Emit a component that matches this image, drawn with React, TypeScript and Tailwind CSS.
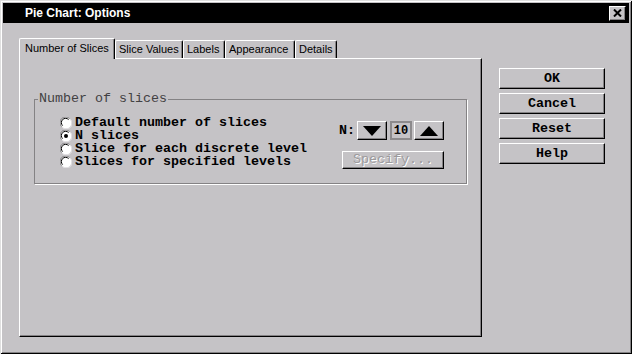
import React from "react";

const mono = "font-['Liberation_Mono','DejaVu_Sans_Mono',monospace]";
const sans = "font-['Liberation_Sans',Arial,sans-serif]";

function Radio({ checked }: { checked?: boolean }) {
  return (
    <svg width="12" height="12" viewBox="0 0 12 12" className="shrink-0">
      <circle cx="6" cy="6" r="5.5" fill="#ffffff" />
      <path d="M1.6 9.6 A5.2 5.2 0 0 1 9.6 1.6" stroke="#848284" strokeWidth="1" fill="none" />
      <path d="M2.6 8.6 A4 4 0 0 1 8.6 2.6" stroke="#000000" strokeWidth="1" fill="none" />
      <path d="M10.4 2.4 A5.2 5.2 0 0 1 2.4 10.4" stroke="#e6e4e6" strokeWidth="1" fill="none" />
      {checked && <circle cx="6" cy="6" r="2" fill="#000000" />}
    </svg>
  );
}

function Btn({ children, className = "" }: { children: React.ReactNode; className?: string }) {
  return (
    <div
      className={`flex items-center justify-center bg-[#c5c3c6] border-t border-l border-white border-r border-b border-r-[#000] border-b-[#000] shadow-[inset_-1px_-1px_0_#848284] ${className}`}
    >
      {children}
    </div>
  );
}

function Tab({ label, active, w }: { label: string; active?: boolean; w: string }) {
  return (
    <div
      className={`${w} ${
        active ? "h-[21px] -mb-px relative z-10 pl-[5px]" : "h-[18px] pl-[3px]"
      } flex items-center bg-[#c5c3c6] border-t border-l border-white border-r border-r-black rounded-tl-[2px] rounded-tr-[2px] shadow-[inset_-1px_0_0_#848284] text-[11px] text-black ${sans} whitespace-nowrap`}
    >
      <span className={active ? "-mt-[1px]" : ""}>{label}</span>
    </div>
  );
}

export default function App() {
  return (
    <div className="w-[632px] h-[354px] bg-[#c5c3c6] p-[3px] shadow-[inset_1px_1px_0_#dfdfdf,inset_-1px_-1px_0_#000,inset_2px_2px_0_#fff,inset_-2px_-2px_0_#848284] overflow-hidden">
      {/* Title bar */}
      <div className="h-[20px] bg-black flex items-center justify-between pl-[22px] pr-[3px]">
        <span className={`text-white font-bold text-[12px] leading-none ${sans}`}>Pie Chart: Options</span>
        <div className="w-[17px] h-[15px] bg-[#c5c3c6] border-t border-l border-white border-r border-b border-r-black border-b-black shadow-[inset_-1px_-1px_0_#848284] flex items-center justify-center">
          <svg width="9" height="8" viewBox="0 0 9 8">
            <path d="M1 0.5 L8 7.5 M8 0.5 L1 7.5" stroke="#000" strokeWidth="2" />
          </svg>
        </div>
      </div>

      {/* Body */}
      <div className="flex pt-[15px] pl-[16px]">
        {/* Left: tabs + panel */}
        <div className="w-[463px] flex flex-col">
          <div className="flex items-end h-[20px]">
            <Tab label="Number of Slices" active w="w-[96px]" />
            <Tab label="Slice Values" w="w-[68px]" />
            <Tab label="Labels" w="w-[42px]" />
            <Tab label="Appearance" w="w-[70px]" />
            <Tab label="Details" w="w-[42px]" />
          </div>
          <div className="h-[279px] border-t border-l border-white border-r border-b border-r-black border-b-black shadow-[inset_-1px_-1px_0_#848284] pl-[14px] pt-[34px]">
            <fieldset className={`w-[433px] h-[91px] border border-[#848284] shadow-[1px_1px_0_#fff] ${mono} text-[13.34px]`}>
              <legend className="ml-[3px] px-[1px] leading-[13px] text-[#424142] -translate-y-[1px]">Number of slices</legend>
              <div className="flex w-full pl-[25px] pr-[22px] pt-[10px]">
                <div className="flex flex-col font-bold text-black">
                  {[
                    ["Default number of slices", false],
                    ["N slices", true],
                    ["Slice for each discrete level", false],
                    ["Slices for specified levels", false],
                  ].map(([t, c]) => (
                    <div key={t as string} className="flex items-center h-[13px] gap-[3px] leading-[13px]">
                      <Radio checked={c as boolean} />
                      <span className="whitespace-pre">{t as string}</span>
                    </div>
                  ))}
                </div>
                <div className="ml-auto mt-[5px] flex flex-col items-end">
                  <div className="flex items-center h-[19px]">
                    <span className="font-bold mr-[2px] leading-[13px]">N:</span>
                    <Btn className="w-[30px] h-[19px]">
                      <svg width="18" height="10" viewBox="0 0 18 10">
                        <path d="M0 0 H18 L9 10 Z" fill="#000" />
                      </svg>
                    </Btn>
                    <div className="w-[22px] h-[19px] ml-[3px] mr-[2px] border-2 border-[#8c8a8c] flex items-center justify-center font-bold text-[12px] leading-none">
                      10
                    </div>
                    <Btn className="w-[30px] h-[19px]">
                      <svg width="18" height="10" viewBox="0 0 18 10">
                        <path d="M0 10 H18 L9 0 Z" fill="#000" />
                      </svg>
                    </Btn>
                  </div>
                  <Btn className="w-[102px] h-[18px] mt-[11px]">
                    <span className="text-[#9c9a9c] [text-shadow:1px_1px_0_#fff] leading-none">Specify...</span>
                  </Btn>
                </div>
              </div>
            </fieldset>
          </div>
        </div>

        {/* Right: buttons */}
        <div className={`ml-[17px] mt-[30px] flex flex-col gap-[4px] ${mono} text-[13.34px] font-bold text-black`}>
          {["OK", "Cancel", "Reset", "Help"].map((t) => (
            <Btn key={t} className="w-[106px] h-[21px]">
              <span className="leading-none whitespace-pre">{t}</span>
            </Btn>
          ))}
        </div>
      </div>
    </div>
  );
}
